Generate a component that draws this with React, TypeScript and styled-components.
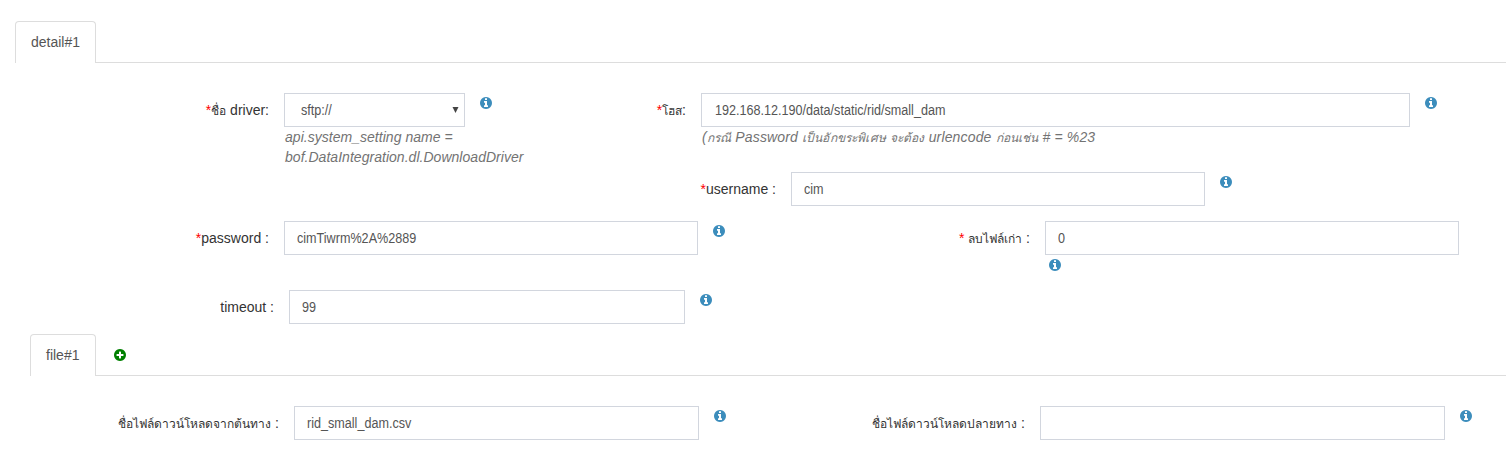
import React from "react";
import styled, { createGlobalStyle } from "styled-components";

const GlobalStyle = createGlobalStyle`
  * { box-sizing: border-box; }
  html, body { margin: 0; padding: 0; background: #fff; overflow: hidden; }
  body {
    font-family: "Liberation Sans", Arial, sans-serif;
    font-size: 14px;
    line-height: 20px;
    color: #333;
  }
`;

const Page = styled.main`
  width: 1506px;
  height: 454px;
  padding-top: 21px;
  overflow: hidden;
`;

const TabBar = styled.nav<{ $indent: number }>`
  display: flex;
  height: 42px;
  margin-left: ${(p) => p.$indent}px;
  border-bottom: 1px solid #ddd;
`;

const Tab = styled.div<{ $width: number }>`
  width: ${(p) => p.$width}px;
  height: 42px;
  padding: 10px 0 0 15px;
  border: 1px solid #ddd;
  border-bottom: 0;
  border-radius: 4px 4px 0 0;
  background: #fff;
  color: #555;
`;

const AddTab = styled.div`
  display: flex;
  padding: 15px 0 0 18px;
  color: #008000;
`;

const Row = styled.div<{ $height: number }>`
  display: flex;
  align-items: flex-start;
  height: ${(p) => p.$height}px;
`;

const Label = styled.label<{ $width: number }>`
  flex: none;
  width: ${(p) => p.$width}px;
  padding: 7px 15px 0 0;
  text-align: right;
  white-space: nowrap;
`;

const Thai = styled.span`
  font-size: 12px;
  line-height: 1;
`;

const Required = styled.span`
  color: #f00;
`;

const Control = styled.div<{ $width: number }>`
  flex: none;
  width: ${(p) => p.$width}px;
`;

const Field = styled.div<{ $pad?: number }>`
  display: flex;
  align-items: center;
  justify-content: space-between;
  height: 34px;
  padding: 0 5px 0 ${(p) => p.$pad ?? 12}px;
  border: 1px solid #d2d6de;
  background: #fff;
  color: #555;
  white-space: nowrap;
`;

const Value = styled.span`
  transform: scaleX(0.9);
  transform-origin: left center;
`;

const Help = styled.div<{ $track?: number }>`
  padding-left: 1px;
  color: #737373;
  font-style: italic;
  white-space: nowrap;
  letter-spacing: ${(p) => p.$track ?? 0.03}px;
`;

const Info = styled.span<{ $below?: boolean }>`
  display: flex;
  flex: none;
  width: 12px;
  margin: ${(p) => (p.$below ? "4px 0 0 4px" : "4px 0 0 15px")};
  color: #3c8dbc;
`;

const CIRCLE =
  "M1664 896q0 209-103 385.5t-279.5 279.5-385.5 103-385.5-103-279.5-279.5-103-385.5 103-385.5 279.5-279.5 385.5-103 385.5 103 279.5 279.5 103 385.5z";

const InfoIcon = ({ below }: { below?: boolean }) => (
  <Info $below={below}>
    <svg width="12" height="12" viewBox="128 128 1536 1536" fill="currentColor" fillRule="evenodd">
      <path
        d={
          "M1152 1376v-160q0-14-9-23t-23-9h-96v-512q0-14-9-23t-23-9h-320q-14 0-23 9t-9 23v160q0 14 9 23t23 9h96v320h-96q-14 0-23 9t-9 23v160q0 14 9 23t23 9h448q14 0 23-9t9-23zM1024 480v-160q0-14-9-23t-23-9h-192q-14 0-23 9t-9 23v160q0 14 9 23t23 9h192q14 0 23-9t9-23z" +
          CIRCLE
        }
      />
    </svg>
  </Info>
);

const PlusIcon = () => (
  <svg width="12" height="12" viewBox="128 128 1536 1536" fill="currentColor" fillRule="evenodd">
    <path
      d={
        "M1344 960v-128q0-26-19-45t-45-19h-256v-256q0-26-19-45t-45-19h-128q-26 0-45 19t-19 45v256h-256q-26 0-45 19t-19 45v128q0 26 19 45t45 19h256v256q0 26 19 45t45 19h128q26 0 45-19t19-45v-256h256q26 0 45-19t19-45z" +
        CIRCLE
      }
    />
  </svg>
);

const Arrow = () => (
  <svg width="7" height="6" viewBox="0 0 7 6">
    <path d="M0.5 0h6L3.5 6z" fill="#444" />
  </svg>
);

export default function App() {
  return (
    <>
      <GlobalStyle />
      <Page>
        <TabBar $indent={15}>
          <Tab $width={81}>detail#1</Tab>
        </TabBar>
        <Row $height={30} />
        <Row $height={79}>
          <Label $width={284}>
            <Required>*</Required>
            <Thai>ชื่อ</Thai> driver:
          </Label>
          <Control $width={181}>
            <Field $pad={16}>
              <Value>sftp://</Value>
              <Arrow />
            </Field>
            <Help>
              api.system_setting name =<br />
              bof.DataIntegration.dl.DownloadDriver
            </Help>
          </Control>
          <InfoIcon />
          <Label $width={209}>
            <Required>*</Required>
            <Thai>โฮส</Thai>:
          </Label>
          <Control $width={709}>
            <Field $pad={13}>
              <Value>192.168.12.190/data/static/rid/small_dam</Value>
            </Field>
            <Help $track={0.15}>
              (<Thai>กรณี</Thai> Password <Thai>เป็นอักขระพิเศษ</Thai> <Thai>จะต้อง</Thai> urlencode <Thai>ก่อนเช่น</Thai> # = %23
            </Help>
          </Control>
          <InfoIcon />
        </Row>
        <Row $height={49}>
          <Label $width={791}>
            <Required>*</Required>username :
          </Label>
          <Control $width={414}>
            <Field>
              <Value>cim</Value>
            </Field>
          </Control>
          <InfoIcon />
        </Row>
        <Row $height={69}>
          <Label $width={284}>
            <Required>*</Required>password :
          </Label>
          <Control $width={414}>
            <Field>
              <Value>cimTiwrm%2A%2889</Value>
            </Field>
          </Control>
          <InfoIcon />
          <Label $width={320}>
            <Required>*</Required> <Thai>ลบไฟล์เก่า</Thai> :
          </Label>
          <Control $width={414}>
            <Field>
              <Value>0</Value>
            </Field>
            <InfoIcon below />
          </Control>
        </Row>
        <Row $height={44}>
          <Label $width={289}>timeout :</Label>
          <Control $width={396}>
            <Field>
              <Value>99</Value>
            </Field>
          </Control>
          <InfoIcon />
        </Row>
        <TabBar $indent={30}>
          <Tab $width={66}>file#1</Tab>
          <AddTab>
            <PlusIcon />
          </AddTab>
        </TabBar>
        <Row $height={30} />
        <Row $height={48}>
          <Label $width={294}>
            <Thai>ชื่อไฟล์ดาวน์โหลดจากต้นทาง</Thai> :
          </Label>
          <Control $width={405}>
            <Field>
              <Value>rid_small_dam.csv</Value>
            </Field>
          </Control>
          <InfoIcon />
          <Label $width={314}>
            <Thai>ชื่อไฟล์ดาวน์โหลดปลายทาง</Thai> :
          </Label>
          <Control $width={405}>
            <Field />
          </Control>
          <InfoIcon />
        </Row>
      </Page>
    </>
  );
}
